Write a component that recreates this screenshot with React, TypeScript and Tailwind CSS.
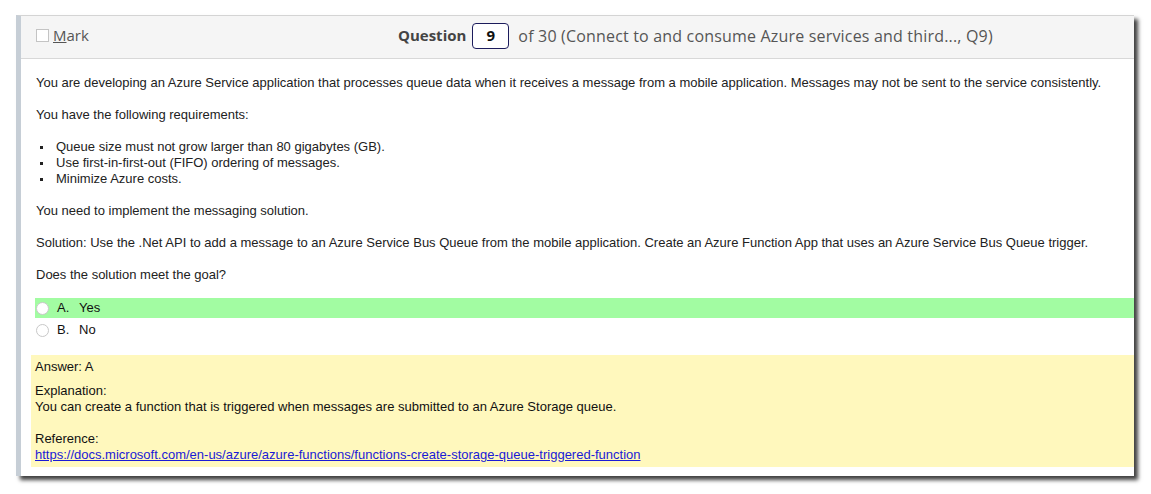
import React from 'react'

const BULLETS = [
  'Queue size must not grow larger than 80 gigabytes (GB).',
  'Use first-in-first-out (FIFO) ordering of messages.',
  'Minimize Azure costs.',
]

const OPTIONS = [
  { key: 'A', label: 'Yes', correct: true },
  { key: 'B', label: 'No', correct: false },
]

const Radio: React.FC = () => (
  <span className="inline-block w-[13px] h-[13px] rounded-full border border-[#c8c8c8] bg-white shrink-0" />
)

export default function App() {
  return (
    <div className="w-[1151px] h-[494px] bg-white pt-[15px] pl-[16px]">
      <div className="w-[1118px] h-[461px] bg-white border-t border-[#d4d4d4] border-l-[5px] border-l-[#c6ced6] shadow-[4px_4px_4px_rgba(0,0,0,0.75)] flex flex-col">
        {/* en-tête */}
        <div className="h-[43px] bg-[#f5f5f5] border-b border-[#d8d8d8] flex items-center pl-[15px] pb-[3px] font-['Open_Sans',sans-serif]">
          <label className="flex items-center w-[362px] text-[15px] text-[#555]">
            <span className="w-[13px] h-[13px] border border-[#c4c4c4] bg-white mr-[4px]" />
            <span><span className="underline">M</span>ark</span>
          </label>
          <div className="flex items-center text-[16px]">
            <span className="font-bold text-[15px] text-[#444]">Question</span>
            <span className="ml-[6px] mr-[9px] w-[37px] h-[26px] flex items-center justify-center border border-[#1c1c5c] rounded-[4px] bg-white font-bold text-[#111] text-[15px]">9</span>
            <span className="text-[#555] tracking-[0.18px]">of 30 (Connect to and consume Azure services and third..., Q9)</span>
          </div>
        </div>

        {/* corps */}
        <div className="flex-1 pt-[16px] pl-[10px] font-['Liberation_Sans',Arial,sans-serif] text-[13px] leading-[16px] text-[#222]">
          <div className="pl-[5px] pr-[10px]">
            <p className="mb-[16px]">You are developing an Azure Service application that processes queue data when it receives a message from a mobile application. Messages may not be sent to the service consistently.</p>
            <p className="mb-[16px]">You have the following requirements:</p>
            <ul className="mb-[16px]">
              {BULLETS.map((b) => (
                <li key={b} className="flex items-center">
                  <span className="w-[3px] h-[3px] bg-[#222] ml-[4px] mr-[13px]" />
                  {b}
                </li>
              ))}
            </ul>
            <p className="mb-[16px]">You need to implement the messaging solution.</p>
            <p className="mb-[16px]">Solution: Use the .Net API to add a message to an Azure Service Bus Queue from the mobile application. Create an Azure Function App that uses an Azure Service Bus Queue trigger.</p>
            <p className="mb-[15px]">Does the solution meet the goal?</p>
          </div>

          <div className="pl-[4px] flex flex-col gap-[2px]">
            {OPTIONS.map((o) => (
              <div key={o.key} className={`h-[20px] flex items-center pl-[1px] text-[13px] text-[#111] ${o.correct ? 'bg-[#a2fca2]' : ''}`}>
                <Radio />
                <span className="ml-[8px] w-[22px]">{o.key}.</span>
                <span>{o.label}</span>
              </div>
            ))}
          </div>

          <div className="mt-[15px] bg-[#fff8bd] pl-[4px] pt-[4px] pb-[4px] text-[#111]">
            <p className="mb-[8px]">Answer: A</p>
            <p>Explanation:</p>
            <p className="mb-[16px]">You can create a function that is triggered when messages are submitted to an Azure Storage queue.</p>
            <p>Reference:</p>
            <a href="#" className="text-[#1a1ad6] underline">https://docs.microsoft.com/en-us/azure/azure-functions/functions-create-storage-queue-triggered-function</a>
          </div>
        </div>
      </div>
    </div>
  )
}
